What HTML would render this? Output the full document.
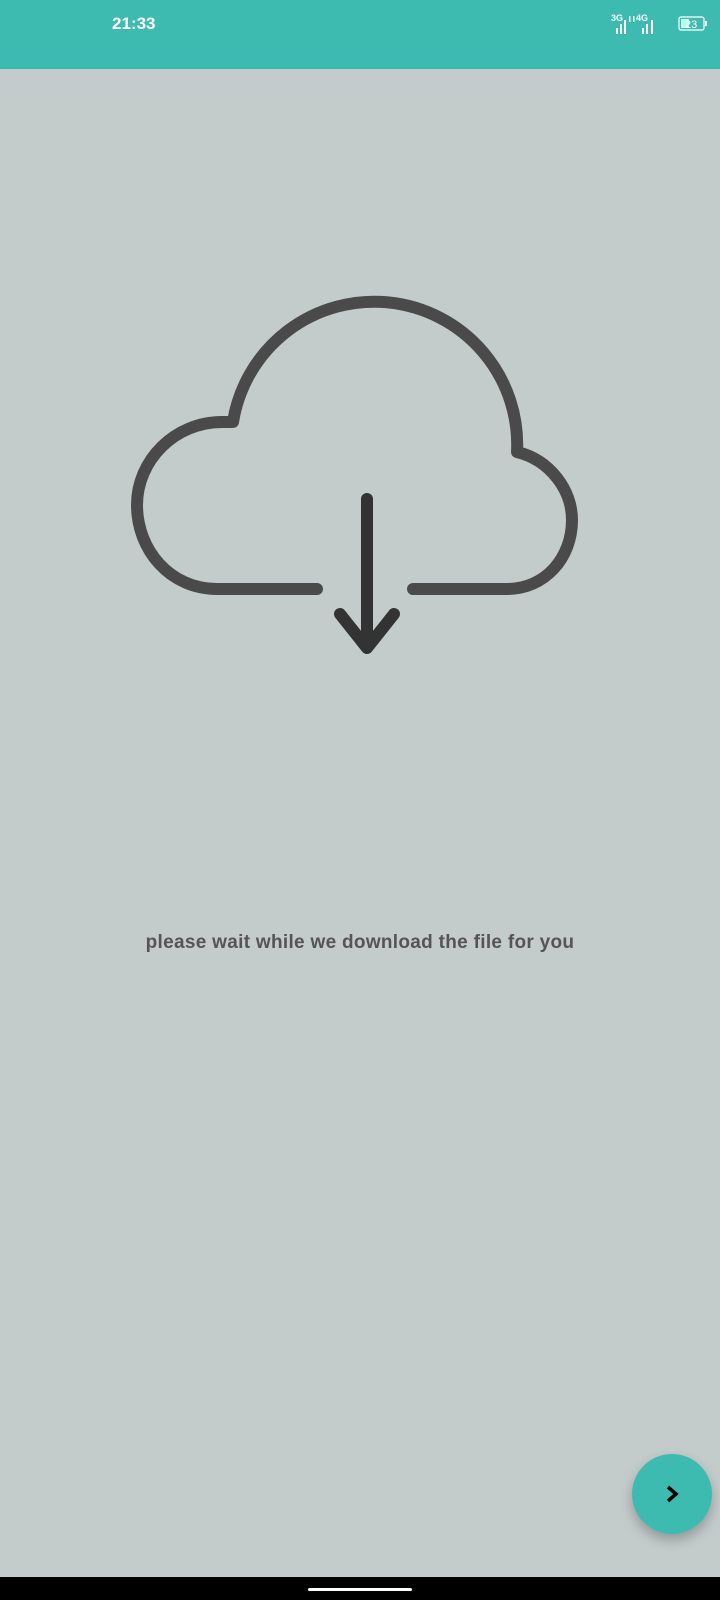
<!DOCTYPE html>
<html><head><meta charset="utf-8"><style>
body{margin:0;width:720px;height:1600px;background:#c4cbcb;position:relative;overflow:hidden;font-family:"Liberation Sans",sans-serif}
.sb{position:absolute;left:0;top:0;width:720px;height:69px;background:#3dbbb0}
.t{position:absolute;left:112px;top:14px;color:#fff;font-size:17px;font-weight:bold}
.txt{position:absolute;left:0;width:720px;top:932px;text-align:center;color:#555;font-size:19px;font-weight:bold;letter-spacing:0.3px}
.fab{position:absolute;left:632px;top:1454px;width:80px;height:80px;border-radius:50%;background:#3dbbb0;box-shadow:0 6px 12px rgba(0,0,0,0.25)}
.nav{position:absolute;left:0;top:1577px;width:720px;height:23px;background:#000}
.nav div{position:absolute;left:308px;top:11px;width:104px;height:3px;background:#fff;border-radius:2px}
</style></head><body>
<div class="sb"><div class="t">21:33</div>
<svg style="position:absolute;left:610px;top:13px" width="105" height="24" fill="#fff">
<text x="1" y="8" font-size="9" font-weight="bold" fill="#fff" font-family="Liberation Sans">3G</text>
<rect x="6" y="15" width="2" height="6"/><rect x="10" y="11" width="2" height="10"/><rect x="14" y="7" width="2" height="14"/>
<rect x="19" y="3" width="1.5" height="6"/><rect x="23" y="3" width="1.5" height="6"/>
<text x="26" y="8" font-size="9" font-weight="bold" fill="#fff" font-family="Liberation Sans">4G</text>
<rect x="32" y="15" width="2" height="6"/><rect x="36" y="11" width="2" height="10"/><rect x="41" y="7" width="2" height="14"/>
<rect x="69" y="4" width="25" height="13" rx="2" fill="none" stroke="#fff" stroke-width="1.2"/>
<rect x="71" y="6" width="8" height="9" fill="#bfe"/>
<rect x="95" y="8" width="2" height="5"/>
<text x="75" y="15" font-size="11" fill="#fff" font-family="Liberation Sans">23</text>
</svg></div>
<svg style="position:absolute;left:0;top:0" width="720" height="700">
<path d="M317 589 H217 C170 589 137 550 137 505 C137 460 175 422 222 422 L233 422 A143 143 0 0 1 517 452 C550 460 572 490 572 520 C572 558 545 589 507 589 H413" fill="none" stroke="#4a4a4a" stroke-width="12" stroke-linecap="round" stroke-linejoin="round"/>
<path d="M367 499 V646 M340 614 L367 648 L394 614" fill="none" stroke="#333" stroke-width="12" stroke-linecap="round" stroke-linejoin="round"/>
</svg>
<div class="txt">please wait while we download the file for you</div>
<div class="fab"><svg width="80" height="80"><path d="M36 33 L44 40 L36 47" fill="none" stroke="#000" stroke-width="3.5"/></svg></div>
<div class="nav"><div></div></div>
</body></html>
